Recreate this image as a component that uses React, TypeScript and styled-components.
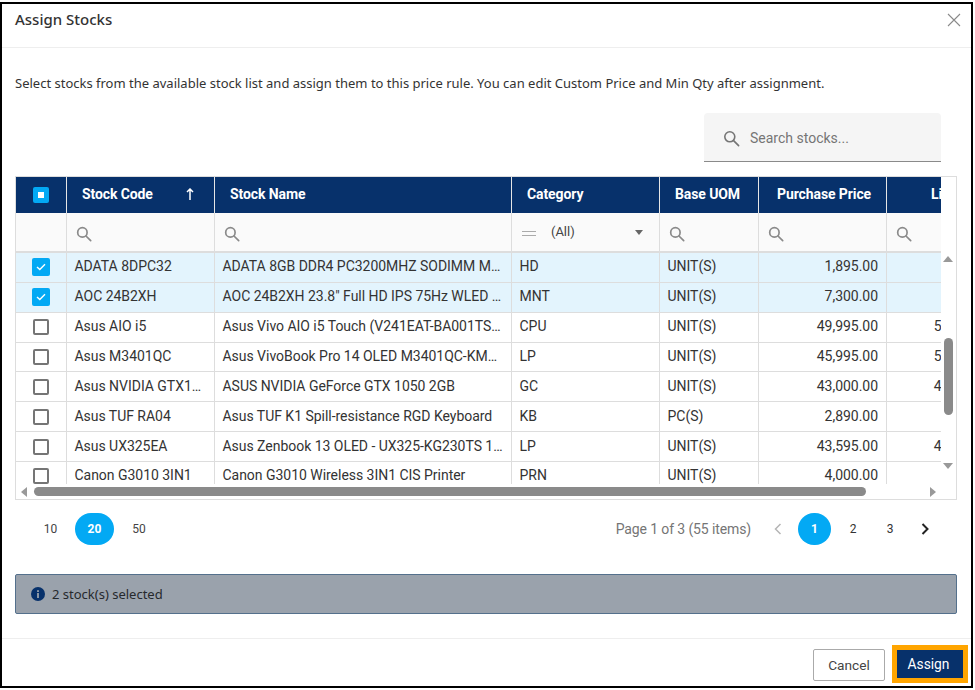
import React from "react";
import styled, { createGlobalStyle } from "styled-components";

const Global = createGlobalStyle`
  html, body { margin: 0; padding: 0; background: #fff; }
  body { font-family: "Roboto", "Liberation Sans", sans-serif; }
  * { box-sizing: border-box; }
`;

const NAVY = "#07316b";
const BLUE = "#03a9f4";
const LINE = "#dddddd";

const Page = styled.div`
  width: 975px;
  height: 690px;
  padding-top: 2px;
  background: #fff;
`;
const Dialog = styled.div`
  width: 973px;
  height: 686px;
  border: 2px solid #000;
  display: flex;
  flex-direction: column;
  background: #fff;
`;
const Header = styled.header`
  height: 44px;
  flex: none;
  border-bottom: 1px solid #eeeeee;
  display: flex;
  align-items: center;
  justify-content: space-between;
  padding: 0 10px 13px 13px;
`;
const Title = styled.h2`
  margin: 0;
  font: 500 15px "Noto Sans", sans-serif;
  color: #333;
`;
const Close = styled.button`
  border: 0;
  background: none;
  padding: 0;
  margin-top: 2px;
  width: 14px;
  height: 14px;
  display: flex;
  color: #8a8a8a;
`;
const Body = styled.main`
  flex: 1;
  padding: 0 14px 0 13px;
  display: flex;
  flex-direction: column;
`;
const Description = styled.p`
  margin: 25px 0 0;
  height: 20px;
  font: 13px/20px "Noto Sans", sans-serif;
  color: #333;
`;
const Toolbar = styled.div`
  display: flex;
  justify-content: flex-end;
  padding-right: 16px;
  margin-top: 20px;
`;
const SearchBox = styled.div`
  width: 237px;
  height: 49px;
  padding: 2px 0 0 19px;
  background: #f5f5f5;
  border-bottom: 1px solid #8a8a8a;
  border-radius: 4px 4px 0 0;
  display: flex;
  align-items: center;
  gap: 10px;
  color: #757575;
  font-size: 14px;
`;
const TableFrame = styled.div`
  margin-top: 14px;
  width: 942px;
  height: 324px;
  border: 1px solid ${LINE};
  display: flex;
  flex-direction: column;
`;
const TableArea = styled.div`
  display: flex;
  height: 307px;
`;
const TableClip = styled.div`
  width: 925px;
  height: 307px;
  overflow: hidden;
`;
const Table = styled.table`
  width: 987px;
  table-layout: fixed;
  border-collapse: separate;
  border-spacing: 0;
  font-size: 14px;
  letter-spacing: -0.03px;
  color: #333;
`;
const HeadCell = styled.th<{ $pad: number }>`
  height: 36px;
  padding: 0 0 3px ${(p) => p.$pad}px;
  background: ${NAVY};
  color: #fff;
  font: 700 14px "Roboto", sans-serif;
  letter-spacing: -0.1px;
  text-align: left;
  border-right: 1px solid #e6e6e6;
  white-space: nowrap;
  overflow: hidden;
  &:first-child { padding-bottom: 0; }
  &:last-child { border-right: 0; }
`;
const HeadInner = styled.span`
  display: flex;
  align-items: center;
  justify-content: space-between;
  padding-right: 20px;
`;
const FilterCell = styled.td`
  height: 40px;
  padding: 3px 0 0 9px;
  background: #fafafa;
  border-right: 1px solid ${LINE};
  border-bottom: 2px solid ${LINE};
  color: #8a8a8a;
  &:last-child { border-right: 0; }
`;
const FilterSelect = styled.div`
  display: flex;
  align-items: center;
  color: #444;
  font-size: 13px;
  padding-right: 16px;
  margin-left: 1px;
  margin-top: -5px;
`;
const Equals = styled.span`
  width: 14px;
  height: 5px;
  margin-top: 4px;
  border-top: 1px solid #aaa;
  border-bottom: 1px solid #aaa;
  margin-right: 15px;
`;
const Caret = styled.span`
  margin: 2px 0 0 auto;
  width: 0;
  height: 0;
  border-left: 4.5px solid transparent;
  border-right: 4.5px solid transparent;
  border-top: 5px solid #666;
`;
const Row = styled.tr<{ $selected?: boolean }>`
  background: ${(p) => (p.$selected ? "#e3f4fd" : "#fff")};
`;
const Cell = styled.td<{ $right?: boolean }>`
  height: 29.86px;
  padding: 0 8px 2px 7.5px;
  border-right: 1px solid ${LINE};
  border-bottom: 1px solid ${LINE};
  white-space: nowrap;
  overflow: hidden;
  text-overflow: ellipsis;
  text-align: ${(p) => (p.$right ? "right" : "left")};
  &:last-child { border-right: 0; }
`;
const CheckCell = styled(Cell)`
  padding: 0;
`;
const Center = styled.span`
  display: flex;
  justify-content: center;
  align-items: center;
  margin-left: -1px;
`;
const Box = styled.span<{ $checked?: boolean }>`
  display: flex;
  align-items: center;
  justify-content: center;
  width: ${(p) => (p.$checked ? 18 : 16)}px;
  height: ${(p) => (p.$checked ? 18 : 16)}px;
  border-radius: 2px;
  background: ${(p) => (p.$checked ? BLUE : "#fff")};
  border: ${(p) => (p.$checked ? "0" : "2px solid #757575")};
`;
const HeadBox = styled.span`
  display: flex;
  align-items: center;
  justify-content: center;
  width: 16px;
  height: 16px;
  border-radius: 2px;
  background: ${BLUE};
  &::after {
    content: "";
    width: 6px;
    height: 6px;
    background: #fff;
  }
`;
const VScroll = styled.div`
  width: 15px;
  margin-top: 76px;
  height: 231px;
  display: flex;
  flex-direction: column;
  align-items: center;
  padding: 3px 1px 0 0;
  color: #999;
`;
const Thumb = styled.div`
  background: #8a8a8a;
  border-radius: 5px;
`;
const VThumb = styled(Thumb)`
  width: 9px;
  height: 77px;
  margin: 76px 0 48px;
`;
const HScroll = styled.div`
  height: 15px;
  display: flex;
  align-items: center;
  padding-left: 5px;
  color: #999;
`;
const HThumb = styled(Thumb)`
  width: 832px;
  height: 9px;
  margin: 0 64px 0 7px;
`;
const Pager = styled.div`
  display: flex;
  align-items: center;
  justify-content: space-between;
  margin-top: 13px;
  height: 32px;
  width: 942px;
  padding-right: 28px;
`;
const PagerGroup = styled.div`
  display: flex;
  align-items: center;
`;
const SizeBtn = styled.span<{ $active?: boolean }>`
  width: ${(p) => (p.$active ? 39 : 19)}px;
  height: 32px;
  border-radius: 16px;
  margin: ${(p) => (p.$active ? "0 15.5px 0 15px" : "0")};
  display: flex;
  align-items: center;
  justify-content: center;
  font-size: 12px;
  font-weight: ${(p) => (p.$active ? 700 : 400)};
  background: ${(p) => (p.$active ? BLUE : "transparent")};
  color: ${(p) => (p.$active ? "#fff" : "#444")};
`;
const SizeGroup = styled(PagerGroup)`
  padding-left: 26px;
`;
const PageInfo = styled.span`
  font-size: 14px;
  letter-spacing: -0.12px;
  color: #757575;
  margin-right: 23px;
`;
const PageBtn = styled.span<{ $active?: boolean }>`
  width: ${(p) => (p.$active ? 33 : 22)}px;
  height: 32px;
  border-radius: 16px;
  display: flex;
  align-items: center;
  justify-content: center;
  font-size: 12px;
  font-weight: ${(p) => (p.$active ? 700 : 400)};
  background: ${(p) => (p.$active ? BLUE : "transparent")};
  color: ${(p) => (p.$active ? "#fff" : "#333")};
  margin: ${(p) => (p.$active ? "0 11px 0 16px" : "0 15px 0 0")};
`;
const NextBtn = styled.span`
  display: flex;
  margin-left: 5px;
`;
const Alert = styled.div`
  margin-top: 29px;
  width: 942px;
  height: 40px;
  background: #9aa2ac;
  border: 1px solid #54708c;
  border-radius: 2px;
  display: flex;
  align-items: center;
  gap: 7px;
  padding-left: 15px;
  font: 13px "Noto Sans", sans-serif;
  color: #26292d;
`;
const Footer = styled.footer`
  margin-top: 24px;
  flex: 1;
  border-top: 1px solid #eeeeee;
  display: flex;
  justify-content: flex-end;
  align-items: flex-start;
  padding: 10px 8px 0 0;
  gap: 12px;
`;
const Cancel = styled.button`
  width: 72px;
  height: 32px;
  background: #fff;
  border: 1px solid #aaa;
  border-radius: 2px;
  font: 13.7px "Roboto", sans-serif;
  color: #444;
  padding: 0;
`;
const Assign = styled.button`
  width: 66px;
  height: 28px;
  margin-top: 1px;
  background: ${NAVY};
  color: #fff;
  border: 0;
  outline: 5px solid #ffa500;
  font: 13.8px "Roboto", sans-serif;
  padding: 0 3px 0 0;
`;
const SearchSvg = styled.svg`
  display: block;
  flex: none;
`;

const Search = ({ size = 17, weight = 1.6 }: { size?: number; weight?: number }) => (
  <SearchSvg width={size} height={size} viewBox="0 0 17 17" fill="none" stroke="currentColor" strokeWidth={weight}>
    <circle cx="6.8" cy="6.8" r="5" />
    <path d="M10.6 10.6 15.6 15.6" strokeLinecap="round" />
  </SearchSvg>
);
const Tick = () => (
  <svg width="10" height="8" viewBox="0 0 10 8" fill="none" stroke="#fff" strokeWidth="1.4">
    <path d="M1 4 3.8 6.6 9 1.2" />
  </svg>
);
const Tri = ({ dir }: { dir: "up" | "down" | "left" | "right" }) => {
  const d = {
    up: "M0 6 5 0 10 6Z",
    down: "M0 0 10 0 5 6Z",
    left: "M6 0 6 10 0 5Z",
    right: "M0 0 6 5 0 10Z",
  }[dir];
  const vertical = dir === "up" || dir === "down";
  return (
    <svg width={vertical ? 10 : 6} height={vertical ? 6 : 10} viewBox={vertical ? "0 0 10 6" : "0 0 6 10"} fill="currentColor" style={{ flex: "none" }}>
      <path d={d} />
    </svg>
  );
};
const Chevron = ({ left, color, w = 2 }: { left?: boolean; color: string; w?: number }) => (
  <svg width="8" height="12" viewBox="0 0 8 12" fill="none" stroke={color} strokeWidth={w}>
    <path d={left ? "M6.5 1 1.5 6 6.5 11" : "M1.5 1 6.5 6 1.5 11"} />
  </svg>
);

const widths = [51, 148, 297, 148, 99, 128, 116];
const heads: [string, number][] = [
  ["", 0],
  ["Stock Code", 15],
  ["Stock Name", 15],
  ["Category", 15],
  ["Base UOM", 15],
  ["Purchase Price", 18],
  ["List Price", 44],
];
const rows = [
  ["ADATA 8DPC32", "ADATA 8GB DDR4 PC3200MHZ SODIMM Memory Module", "HD", "UNIT(S)", "1,895.00", "2,100.00", true],
  ["AOC 24B2XH", 'AOC 24B2XH 23.8" Full HD IPS 75Hz WLED Monitor Display', "MNT", "UNIT(S)", "7,300.00", "8,000.00", true],
  ["Asus AIO i5", "Asus Vivo AIO i5 Touch (V241EAT-BA001TS) All in One", "CPU", "UNIT(S)", "49,995.00", "54,995.00", false],
  ["Asus M3401QC", "Asus VivoBook Pro 14 OLED M3401QC-KM007TS Laptop", "LP", "UNIT(S)", "45,995.00", "50,995.00", false],
  ["Asus NVIDIA GTX1050", "ASUS NVIDIA GeForce GTX 1050 2GB", "GC", "UNIT(S)", "43,000.00", "47,000.00", false],
  ["Asus TUF RA04", "Asus TUF K1 Spill-resistance RGD Keyboard", "KB", "PC(S)", "2,890.00", "3,200.00", false],
  ["Asus UX325EA", "Asus Zenbook 13 OLED - UX325-KG230TS 13.3 inch Laptop", "LP", "UNIT(S)", "43,595.00", "47,995.00", false],
  ["Canon G3010 3IN1", "Canon G3010 Wireless 3IN1 CIS Printer", "PRN", "UNIT(S)", "4,000.00", "4,500.00", false],
] as const;

export default function App() {
  return (
    <Page>
      <Global />
      <Dialog>
        <Header>
          <Title>Assign Stocks</Title>
          <Close aria-label="Close">
            <svg width="14" height="14" viewBox="0 0 14 14" stroke="currentColor" strokeWidth="1.1" fill="none">
              <path d="M1 1 13 13M13 1 1 13" />
            </svg>
          </Close>
        </Header>
        <Body>
          <Description>
            Select stocks from the available stock list and assign them to this price rule. You can edit Custom Price and Min Qty after assignment.
          </Description>
          <Toolbar>
            <SearchBox>
              <Search />
              <span>Search stocks...</span>
            </SearchBox>
          </Toolbar>
          <TableFrame>
            <TableArea>
              <TableClip>
                <Table>
                  <colgroup>
                    {widths.map((w, i) => (
                      <col key={i} width={w} />
                    ))}
                  </colgroup>
                  <thead>
                    <tr>
                      {heads.map(([h, pad], i) => (
                        <HeadCell key={i} $pad={pad}>
                          {i === 0 ? (
                            <Center>
                              <HeadBox />
                            </Center>
                          ) : i === 1 ? (
                            <HeadInner>
                              {h}
                              <svg width="8" height="12" viewBox="0 0 8 12" fill="none" stroke="#fff" strokeWidth="1.5">
                                <path d="M4 12V1M1 4 4 1 7 4" />
                              </svg>
                            </HeadInner>
                          ) : (
                            h
                          )}
                        </HeadCell>
                      ))}
                    </tr>
                    <tr>
                      {heads.map((_, i) => (
                        <FilterCell key={i}>
                          {i === 0 ? null : i === 3 ? (
                            <FilterSelect>
                              <Equals />
                              (All)
                              <Caret />
                            </FilterSelect>
                          ) : (
                            <Search size={16} weight={1.8} />
                          )}
                        </FilterCell>
                      ))}
                    </tr>
                  </thead>
                  <tbody>
                    {rows.map((r) => (
                      <Row key={r[0]} $selected={r[6]}>
                        <CheckCell>
                          <Center>
                            <Box $checked={r[6]}>{r[6] && <Tick />}</Box>
                          </Center>
                        </CheckCell>
                        <Cell>{r[0]}</Cell>
                        <Cell>{r[1]}</Cell>
                        <Cell>{r[2]}</Cell>
                        <Cell>{r[3]}</Cell>
                        <Cell $right>{r[4]}</Cell>
                        <Cell $right>{r[5]}</Cell>
                      </Row>
                    ))}
                  </tbody>
                </Table>
              </TableClip>
              <VScroll>
                <Tri dir="up" />
                <VThumb />
                <Tri dir="down" />
              </VScroll>
            </TableArea>
            <HScroll>
              <Tri dir="left" />
              <HThumb />
              <Tri dir="right" />
            </HScroll>
          </TableFrame>
          <Pager>
            <SizeGroup>
              <SizeBtn>10</SizeBtn>
              <SizeBtn $active>20</SizeBtn>
              <SizeBtn>50</SizeBtn>
            </SizeGroup>
            <PagerGroup>
              <PageInfo>Page 1 of 3 (55 items)</PageInfo>
              <Chevron left color="#b5b5b5" w={1.5} />
              <PageBtn $active>1</PageBtn>
              <PageBtn>2</PageBtn>
              <PageBtn>3</PageBtn>
              <NextBtn>
                <Chevron color="#222" />
              </NextBtn>
            </PagerGroup>
          </Pager>
          <Alert>
            <svg width="14" height="14" viewBox="0 0 14 14">
              <circle cx="7" cy="7" r="7" fill={NAVY} />
              <rect x="6.1" y="6" width="1.8" height="5" fill="#9aa2ac" />
              <rect x="6.1" y="3.2" width="1.8" height="1.8" fill="#9aa2ac" />
            </svg>
            2 stock(s) selected
          </Alert>
        </Body>
        <Footer>
          <Cancel>Cancel</Cancel>
          <Assign>Assign</Assign>
        </Footer>
      </Dialog>
    </Page>
  );
}
